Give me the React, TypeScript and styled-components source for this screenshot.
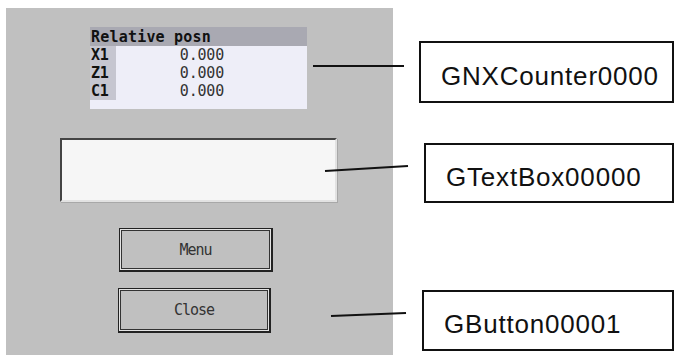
import React from "react";
import styled, { createGlobalStyle } from "styled-components";

const GlobalStyle = createGlobalStyle`
  html, body {
    margin: 0;
    padding: 0;
    background: #ffffff;
  }
`;

const Canvas = styled.div`
  position: relative;
  width: 676px;
  height: 356px;
  overflow: hidden;
  display: flex;
  align-items: flex-start;
  background: #ffffff;
`;

const Panel = styled.div`
  margin: 8px 0 0 6px;
  width: 387px;
  height: 347px;
  background: #c0c0c0;
  display: flex;
  flex-direction: column;
  align-items: flex-start;
`;

const Counter = styled.div`
  margin: 19px 0 0 84px;
  width: 217px;
  height: 82px;
  background: #eeeef8;
  display: flex;
  flex-direction: column;
  font-family: "DejaVu Sans Mono", "Liberation Mono", monospace;
  font-size: 15px;
`;

const CounterHead = styled.div`
  height: 19px;
  line-height: 20px;
  background: #a9a9b2;
  color: #111;
  font-weight: bold;
  letter-spacing: 0.2px;
  padding-left: 1px;
`;

const CounterRow = styled.div`
  display: flex;
  height: 18px;
  line-height: 18px;
`;

const Axis = styled.div`
  width: 25px;
  background: #c6c6d0;
  color: #111;
  font-weight: bold;
  padding-left: 1px;
  letter-spacing: -0.4px;
`;

const Value = styled.div`
  width: 108px;
  text-align: right;
  color: #333;
  letter-spacing: -0.2px;
`;

const TextBox = styled.div`
  margin: 29px 0 0 54px;
  width: 277px;
  height: 64px;
  box-sizing: border-box;
  background: #f6f6f6;
  border-top: 2px solid #444;
  border-left: 2px solid #444;
  border-bottom: 2px solid #e2e2e2;
  border-right: 2px solid #e2e2e2;
  box-shadow: 1px 1px 0 #a8a8a8;
`;

const Button = styled.div<{ $left: number; $top: number; $w: number; $h: number }>`
  margin: ${(p) => p.$top}px 0 0 ${(p) => p.$left}px;
  width: ${(p) => p.$w}px;
  height: ${(p) => p.$h}px;
  box-sizing: border-box;
  border: 1px solid #222;
  border-right-width: 2px;
  border-bottom-width: 2px;
  box-shadow: inset 0 0 0 1px #e4e4e4, inset 0 0 0 2px #333;
  display: flex;
  align-items: center;
  justify-content: center;
  font-family: "DejaVu Sans Mono", "Liberation Mono", monospace;
  font-size: 15px;
  letter-spacing: -1px;
  color: #333;
`;

const Labels = styled.div`
  display: flex;
  flex-direction: column;
  align-items: flex-start;
`;

const Label = styled.div<{ $left: number; $top: number; $h: number }>`
  margin: ${(p) => p.$top}px 0 0 ${(p) => p.$left}px;
  width: ${(p) => 674 - 393 - p.$left}px;
  height: ${(p) => p.$h}px;
  box-sizing: border-box;
  border: 2px solid #111;
  display: flex;
  align-items: center;
  padding: 8px 0 0 20px;
  font-family: "Liberation Sans", Arial, sans-serif;
  font-size: 26px;
  letter-spacing: 0.8px;
  color: #111;
`;

const Leaders = styled.svg`
  position: absolute;
  left: 0;
  top: 0;
  pointer-events: none;
`;

const rows = [
  { axis: "X1", value: "0.000" },
  { axis: "Z1", value: "0.000" },
  { axis: "C1", value: "0.000" },
];

export default function App() {
  return (
    <>
      <GlobalStyle />
      <Canvas>
        <Panel>
          <Counter>
            <CounterHead>Relative posn</CounterHead>
            {rows.map((r) => (
              <CounterRow key={r.axis}>
                <Axis>{r.axis}</Axis>
                <Value>{r.value}</Value>
              </CounterRow>
            ))}
          </Counter>
          <TextBox />
          <Button $left={113} $top={26} $w={154} $h={44}>
            Menu
          </Button>
          <Button $left={112} $top={16} $w={153} $h={45}>
            Close
          </Button>
        </Panel>
        <Labels>
          <Label $left={26} $top={41} $h={62}>
            GNXCounter0000
          </Label>
          <Label $left={31} $top={40} $h={60}>
            GTextBox00000
          </Label>
          <Label $left={29} $top={87} $h={61}>
            GButton00001
          </Label>
        </Labels>
        <Leaders width={676} height={356}>
          <g stroke="#111" strokeWidth={2} fill="none">
            <line x1={313} y1={66} x2={404} y2={66} />
            <line x1={325} y1={171} x2={408} y2={166} />
            <line x1={331} y1={316} x2={406} y2={313} />
          </g>
        </Leaders>
      </Canvas>
    </>
  );
}
